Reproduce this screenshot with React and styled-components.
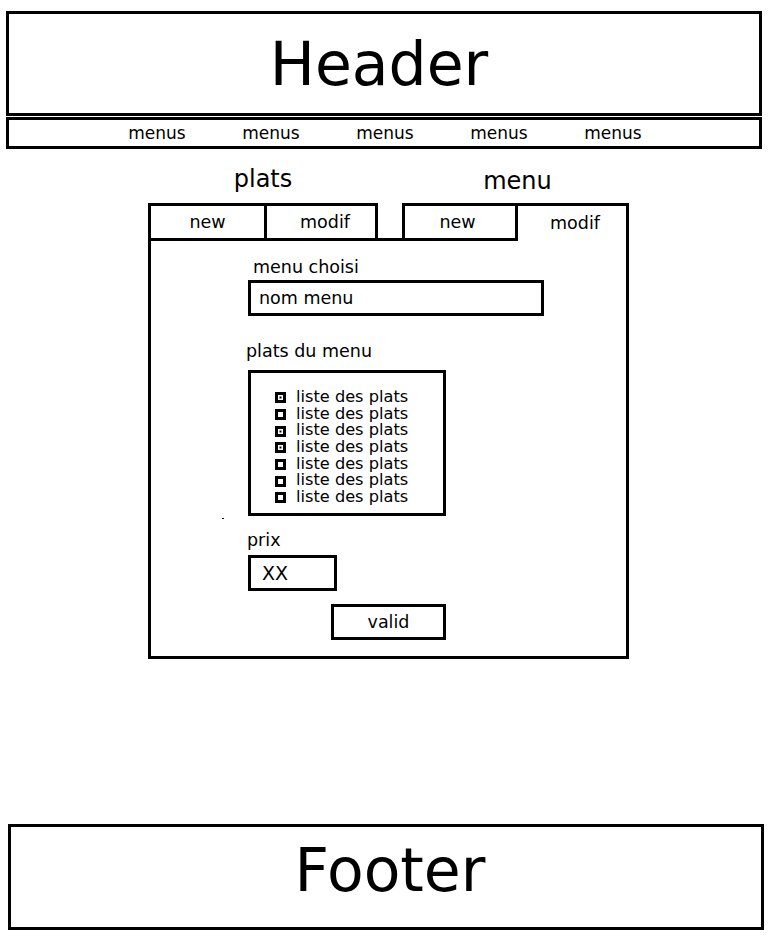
import React from 'react';
import styled, { createGlobalStyle } from 'styled-components';

const GlobalStyle = createGlobalStyle`
  html, body {
    margin: 0;
    padding: 0;
    background: #fff;
  }
  body {
    font-family: "DejaVu Sans", "Liberation Sans", sans-serif;
    color: #000;
  }
  * {
    box-sizing: border-box;
  }
`;

const Page = styled.div`
  width: 768px;
  height: 950px;
  display: flex;
  flex-direction: column;
`;

const Banner = styled.div`
  width: 756px;
  height: ${(p) => p.height}px;
  margin: ${(p) => p.margin};
  border: 3px solid #000;
  display: flex;
  align-items: center;
  justify-content: center;
  padding: ${(p) => p.pad || '0'};
  font-size: 60px;
  line-height: 1;
`;

const Nav = styled.nav`
  width: 756px;
  height: 32px;
  margin: 1px 0 0 6px;
  border: 3px solid #000;
  display: flex;
  align-items: center;
  justify-content: center;
  padding-left: 2px;
`;

const NavItem = styled.span`
  width: 114px;
  text-align: center;
  font-size: 17px;
`;

const Main = styled.main`
  flex: 1;
  padding: 0 0 0 148px;
`;

const Board = styled.div`
  width: 481px;
  margin-top: 16px;
`;

const TabRow = styled.div`
  display: flex;
  gap: 24px;
  align-items: flex-end;
`;

const Group = styled.div`
  width: ${(p) => p.width}px;
  display: flex;
  flex-direction: column;
`;

const GroupTitle = styled.div`
  font-size: 24px;
  line-height: 28px;
  height: 28px;
  text-align: center;
  margin-bottom: ${(p) => p.gap}px;
  padding-left: ${(p) => p.shift || 0}px;
`;

const Tabs = styled.div`
  display: flex;
`;

const Tab = styled.div`
  width: ${(p) => p.width}px;
  height: ${(p) => (p.active ? 38 : 35)}px;
  margin-bottom: ${(p) => (p.active ? -3 : 0)}px;
  border-top: 3px solid #000;
  border-right: 3px solid #000;
  border-left: ${(p) => (p.first ? '3px solid #000' : 'none')};
  background: #fff;
  position: relative;
  z-index: ${(p) => (p.active ? 1 : 0)};
  display: flex;
  justify-content: center;
  align-items: ${(p) => (p.active ? 'flex-start' : 'center')};
  padding-top: ${(p) => (p.active ? 7 : 0)}px;
  padding-bottom: ${(p) => (p.active ? 0 : 1)}px;
  padding-left: ${(p) => Math.max(p.shift || 0, 0)}px;
  padding-right: ${(p) => Math.max(-(p.shift || 0), 0)}px;
  font-size: 17.5px;
  line-height: 20px;
`;

const Body = styled.div`
  height: 421px;
  border: 3px solid #000;
  padding: 16px 0 0 97px;
  display: flex;
  flex-direction: column;
  align-items: flex-start;
`;

const Label = styled.div`
  font-size: 17.5px;
  line-height: 20px;
  margin-left: ${(p) => p.shift || 0}px;
  margin-top: ${(p) => p.top || 0}px;
`;

const Field = styled.div`
  width: ${(p) => p.width}px;
  height: 36px;
  margin-top: ${(p) => p.top}px;
  border: 3px solid #000;
  padding-left: ${(p) => p.pad}px;
  font-size: ${(p) => p.size}px;
  line-height: 30px;
  white-space: nowrap;
`;

const ListBox = styled.div`
  width: 198px;
  height: 146px;
  margin-top: 9px;
  border: 3px solid #000;
  padding: 16px 0 0 24px;
`;

const Item = styled.div`
  display: flex;
  align-items: center;
  gap: 10px;
  font-size: 16.2px;
  line-height: 16.67px;
  height: 16.67px;
`;

const Check = styled.span`
  flex: none;
  width: 11px;
  height: 11px;
  margin-top: 1px;
  border: 3px solid #000;
  background: ${(p) => (p.checked ? '#000' : '#fff')};
  box-shadow: ${(p) => (p.checked ? 'inset 0 0 0 1.5px #fff' : 'none')};
`;

const Speck = styled.span`
  width: 2px;
  height: 1px;
  margin: 2px 0 0 -26px;
  background: #000;
`;

const Button = styled.button`
  width: 115px;
  height: 36px;
  margin: 13px 0 0 83px;
  border: 3px solid #000;
  background: #fff;
  padding: 0;
  font-family: inherit;
  font-size: 17.5px;
  line-height: 30px;
  color: #000;
`;

const dishes = [true, false, true, true, false, false, false];

export default function App() {
  return (
    <Page>
      <GlobalStyle />
      <Banner height={105} margin="11px 0 0 6px" pad="0 10px 0 0">Header</Banner>
      <Nav>
        {[0, 1, 2, 3, 4].map((i) => (
          <NavItem key={i}>menus</NavItem>
        ))}
      </Nav>
      <Main>
        <Board>
          <TabRow>
            <Group width={230}>
              <GroupTitle gap={10}>plats</GroupTitle>
              <Tabs>
                <Tab first width={119}>new</Tab>
                <Tab width={111} shift={8}>modif</Tab>
              </Tabs>
            </Group>
            <Group width={227}>
              <GroupTitle gap={8} shift={4}>menu</GroupTitle>
              <Tabs>
                <Tab first width={116} shift={-5}>new</Tab>
                <Tab active width={111} shift={6}>modif</Tab>
              </Tabs>
            </Group>
          </TabRow>
          <Body>
            <Label shift={5}>menu choisi</Label>
            <Field width={296} top={3} pad={8} size={17.5}>nom menu</Field>
            <Label shift={-2} top={25}>plats du menu</Label>
            <ListBox>
              {dishes.map((checked, i) => (
                <Item key={i}>
                  <Check checked={checked} />
                  liste des plats
                </Item>
              ))}
            </ListBox>
            <Speck />
            <Label shift={-1} top={11}>prix</Label>
            <Field width={89} top={5} pad={11} size={19}>XX</Field>
            <Button type="button">valid</Button>
          </Body>
        </Board>
      </Main>
      <Banner height={106} margin="0 0 20px 8px" pad="0 0 14px 8px">Footer</Banner>
    </Page>
  );
}
